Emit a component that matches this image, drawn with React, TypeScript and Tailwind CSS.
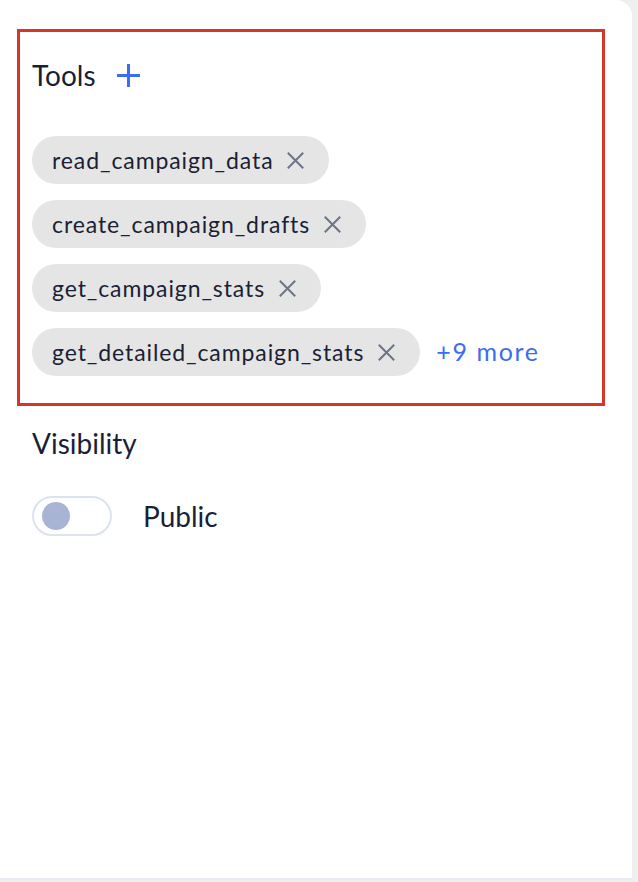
import React from "react";

const tools = [
  "read_campaign_data",
  "create_campaign_drafts",
  "get_campaign_stats",
  "get_detailed_campaign_stats",
];

function CloseIcon() {
  return (
    <svg width="17" height="17" viewBox="0 0 17 17" fill="none" stroke="#6b7489" strokeWidth="2">
      <path d="M0.8 0.8 L16.2 16.2 M16.2 0.8 L0.8 16.2" />
    </svg>
  );
}

function PlusIcon() {
  return (
    <svg width="23" height="23" viewBox="0 0 23 23" fill="none" stroke="#3d6cf2" strokeWidth="3">
      <path d="M11.5 0 V23 M0 11.5 H23" />
    </svg>
  );
}

export default function App() {
  return (
    <div className="w-[638px] h-[882px] bg-[#efefef] flex" style={{ fontFamily: "Lato, 'Noto Sans', sans-serif" }}>
      <div className="w-[632px] h-[880px] bg-white rounded-tr-[16px] border-b-2 border-[#e6ebf6] flex flex-col">
        <div className="ml-[17px] mr-[27px] mt-[29px] border-[3px] border-[#d8352a] pl-[12px] pt-[27px] pb-[27px]">
          <div className="flex items-center gap-[21px] h-[32px]">
            <span className="text-[28px] leading-[32px] text-[#1a1f36]">Tools</span>
            <PlusIcon />
          </div>
          <div className="mt-[45px] flex flex-col gap-[16px]">
            {tools.map((t, i) => (
              <div key={t} className="flex items-center gap-[16px]">
                <div className="h-[48px] rounded-full bg-[#e5e5e5] pl-[20px] pr-[25px] flex items-center gap-[14px]">
                  <span className="text-[23px] tracking-[0.9px] text-[#1a1f36]">{t}</span>
                  <CloseIcon />
                </div>
                {i === tools.length - 1 && (
                  <span className="text-[25px] tracking-[1.6px] text-[#3d6cf2]">+9 more</span>
                )}
              </div>
            ))}
          </div>
        </div>
        <div className="pl-[32px] mt-[21px]">
          <div className="text-[28px] leading-[32px] text-[#1a1f36]">Visibility</div>
          <div className="mt-[36px] flex items-center gap-[31px]">
            <div className="w-[80px] h-[40px] rounded-full border-2 border-[#dde2ef] flex items-center pl-[8px]">
              <div className="w-[28px] h-[28px] rounded-full bg-[#a8b4d3]" />
            </div>
            <span className="text-[28px] text-[#1a1f36]">Public</span>
          </div>
        </div>
      </div>
    </div>
  );
}
